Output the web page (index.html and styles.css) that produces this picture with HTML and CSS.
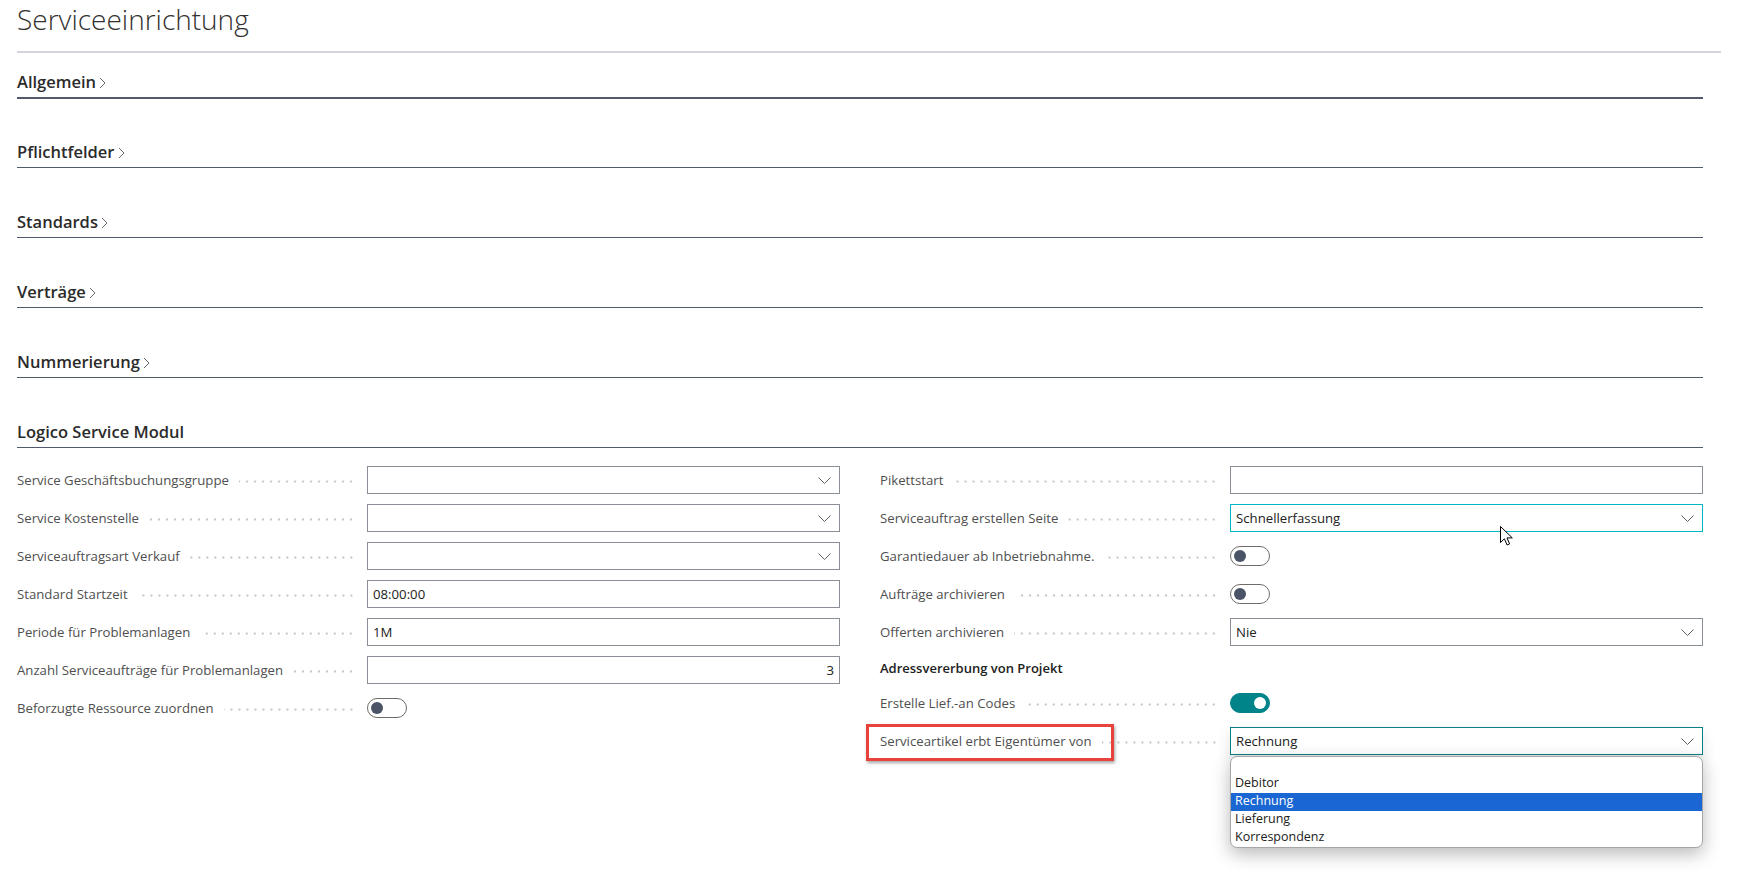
FILE: index.html
```html
<!DOCTYPE html>
<html lang="de">
<head>
<meta charset="utf-8">
<title>Serviceeinrichtung</title>
<link rel="stylesheet" href="styles.css">
</head>
<body>
<div class="page">
  <h1 class="title">Serviceeinrichtung</h1>
  <div class="divider"></div>

  <section class="fasttab first">
    <div class="tab-head"><span>Allgemein</span><svg class="tab-chev" width="7" height="12" viewBox="0 0 7 12"><polyline points="1,1 6,6 1,11" fill="none" stroke="#6b6b6b" stroke-width="1"/></svg></div>
  </section>
  <section class="fasttab">
    <div class="tab-head"><span>Pflichtfelder</span><svg class="tab-chev" width="7" height="12" viewBox="0 0 7 12"><polyline points="1,1 6,6 1,11" fill="none" stroke="#6b6b6b" stroke-width="1"/></svg></div>
  </section>
  <section class="fasttab">
    <div class="tab-head"><span>Standards</span><svg class="tab-chev" width="7" height="12" viewBox="0 0 7 12"><polyline points="1,1 6,6 1,11" fill="none" stroke="#6b6b6b" stroke-width="1"/></svg></div>
  </section>
  <section class="fasttab">
    <div class="tab-head"><span>Verträge</span><svg class="tab-chev" width="7" height="12" viewBox="0 0 7 12"><polyline points="1,1 6,6 1,11" fill="none" stroke="#6b6b6b" stroke-width="1"/></svg></div>
  </section>
  <section class="fasttab">
    <div class="tab-head"><span>Nummerierung</span><svg class="tab-chev" width="7" height="12" viewBox="0 0 7 12"><polyline points="1,1 6,6 1,11" fill="none" stroke="#6b6b6b" stroke-width="1"/></svg></div>
  </section>
  <section class="fasttab open">
    <div class="tab-head"><span>Logico Service Modul</span></div>
    <div class="fields">
      <div class="col">
        <div class="row"><div class="lbl"><span>Service Geschäftsbuchungsgruppe</span><i class="dots"></i></div>
          <div class="box"><span class="val"></span><svg class="chev" width="13" height="7" viewBox="0 0 13 7"><polyline points="0.5,0.5 6.5,6.5 12.5,0.5" fill="none" stroke="#5f5f5f" stroke-width="1"/></svg></div></div>
        <div class="row"><div class="lbl"><span>Service Kostenstelle</span><i class="dots"></i></div>
          <div class="box"><span class="val"></span><svg class="chev" width="13" height="7" viewBox="0 0 13 7"><polyline points="0.5,0.5 6.5,6.5 12.5,0.5" fill="none" stroke="#5f5f5f" stroke-width="1"/></svg></div></div>
        <div class="row"><div class="lbl"><span>Serviceauftragsart Verkauf</span><i class="dots"></i></div>
          <div class="box"><span class="val"></span><svg class="chev" width="13" height="7" viewBox="0 0 13 7"><polyline points="0.5,0.5 6.5,6.5 12.5,0.5" fill="none" stroke="#5f5f5f" stroke-width="1"/></svg></div></div>
        <div class="row"><div class="lbl"><span>Standard Startzeit</span><i class="dots"></i></div>
          <div class="box"><span class="val">08:00:00</span></div></div>
        <div class="row"><div class="lbl"><span>Periode für Problemanlagen</span><i class="dots"></i></div>
          <div class="box"><span class="val">1M</span></div></div>
        <div class="row"><div class="lbl"><span>Anzahl Serviceaufträge für Problemanlagen</span><i class="dots"></i></div>
          <div class="box num"><span class="val">3</span></div></div>
        <div class="row"><div class="lbl"><span>Beforzugte Ressource zuordnen</span><i class="dots"></i></div>
          <div class="ctl"><span class="toggle"><span class="knob"></span></span></div></div>
      </div>

      <div class="col">
        <div class="row"><div class="lbl"><span>Pikettstart</span><i class="dots"></i></div>
          <div class="box"><span class="val"></span></div></div>
        <div class="row"><div class="lbl"><span>Serviceauftrag erstellen Seite</span><i class="dots"></i></div>
          <div class="box focus"><span class="val">Schnellerfassung</span><svg class="chev" width="13" height="7" viewBox="0 0 13 7"><polyline points="0.5,0.5 6.5,6.5 12.5,0.5" fill="none" stroke="#5f5f5f" stroke-width="1"/></svg></div></div>
        <div class="row"><div class="lbl"><span>Garantiedauer ab Inbetriebnahme.</span><i class="dots"></i></div>
          <div class="ctl"><span class="toggle"><span class="knob"></span></span></div></div>
        <div class="row"><div class="lbl"><span>Aufträge archivieren</span><i class="dots"></i></div>
          <div class="ctl"><span class="toggle"><span class="knob"></span></span></div></div>
        <div class="row"><div class="lbl"><span>Offerten archivieren</span><i class="dots"></i></div>
          <div class="box"><span class="val">Nie</span><svg class="chev" width="13" height="7" viewBox="0 0 13 7"><polyline points="0.5,0.5 6.5,6.5 12.5,0.5" fill="none" stroke="#5f5f5f" stroke-width="1"/></svg></div></div>
        <div class="caption">Adressvererbung von Projekt</div>
        <div class="row"><div class="lbl"><span>Erstelle Lief.-an Codes</span><i class="dots"></i></div>
          <div class="ctl"><span class="toggle on"><span class="knob"></span></span></div></div>
        <div class="row"><div class="lbl marked"><span>Serviceartikel erbt Eigentümer von</span><i class="dots"></i><b class="annot"></b></div>
          <div class="box open-select"><span class="val">Rechnung</span><svg class="chev" width="13" height="7" viewBox="0 0 13 7"><polyline points="0.5,0.5 6.5,6.5 12.5,0.5" fill="none" stroke="#5f5f5f" stroke-width="1"/></svg>
            <ul class="list">
              <li>&nbsp;</li>
              <li>Debitor</li>
              <li class="sel">Rechnung</li>
              <li>Lieferung</li>
              <li>Korrespondenz</li>
            </ul>
          </div></div>
      </div>
    </div>
  </section>

  <svg class="cursor" width="14" height="21" viewBox="0 0 14 21"><path d="M0.5 0.5 L0.5 16.5 L4.4 12.8 L7.1 19 L9.6 17.9 L7 11.9 L12.3 11.9 Z" fill="#fff" stroke="#000" stroke-width="1" stroke-linejoin="round"/></svg>
</div>
</body>
</html>
```
FILE: styles.css
```css
* { box-sizing: border-box; }
html, body { margin: 0; background: #fff; }
body { font-family: "Open Sans", "Noto Sans", sans-serif; color: #212121; }

.page { position: relative; width: 1740px; height: 878px; padding-left: 17px; overflow: hidden; }

.title { margin: 0; padding-top: 0; font-weight: 300; font-size: 28px; line-height: 38px; color: #323130; }
.divider { margin-top: 13px; width: 1704px; height: 2px; background: #d2d5da; }

.fasttab { width: 1686px; margin-top: 42px; }
.fasttab.first { margin-top: 17px; margin-bottom: -1px; }
.tab-head { display: flex; align-items: center; gap: 3px; height: 28px; padding-bottom: 3px; border-bottom: 1px solid #505a6b; font-size: 16.5px; font-weight: 600; line-height: 24px; color: #2b2b2b; }
.fasttab.first .tab-head { height: 29px; border-bottom-width: 2px; }
.tab-chev { margin-top: 2px; }

.fields { display: grid; grid-template-columns: 823px 823px; column-gap: 40px; padding-top: 18px; }
.col { display: flex; flex-direction: column; gap: 10px; }

.row { display: grid; grid-template-columns: 350px 1fr; height: 28px; align-items: center; }
.lbl { position: relative; display: flex; align-items: center; font-size: 13.2px; color: #4f4f4f; white-space: nowrap; height: 28px; }
.dots { flex: 1; height: 3px; margin: 2px 12px 0 10px; background-image: radial-gradient(circle, #c4c4c4 0.9px, transparent 1.3px); background-size: 8px 3px; background-position: right center; }

.box { position: relative; display: flex; align-items: center; height: 28px; border: 1px solid #8a8e96; padding: 0 8px 0 5px; font-size: 13.2px; color: #212121; background: #fff; }
.box .val { flex: 1; }
.box.num .val { text-align: right; }
.box.num { padding-right: 5px; }
.box.focus { border-color: #00b7c3; }
.box.open-select { border-color: #0b7f86; box-shadow: 0 6px 14px rgba(0,0,0,0.12); }
.chev { flex: none; }

.ctl { display: flex; align-items: center; height: 28px; }
.toggle { position: relative; display: block; width: 40px; height: 20px; border: 1px solid #6e6c6a; border-radius: 10px; background: #fff; }
.toggle .knob { position: absolute; left: 3px; top: 3px; width: 12px; height: 12px; border-radius: 50%; background: #4b5466; }
.toggle.on { background: #008489; border-color: #008489; }
.toggle.on .knob { left: auto; right: 3px; background: #fff; }

.caption { height: 23px; display: flex; align-items: center; font-size: 13px; font-weight: 600; color: #212121; }

.annot { position: absolute; left: -14px; top: -3px; width: 248px; height: 37px; border: 3px solid #e8423c; box-shadow: 1px 2px 3px rgba(0,0,0,0.35); }

.list { position: absolute; left: -1px; right: -1px; top: 28px; margin: 0; padding: 0; list-style: none; background: #fff; border: 1px solid #a6a6a6; border-radius: 7px; overflow: hidden; box-shadow: 0 6px 18px rgba(0,0,0,0.28); z-index: 5; }
.list li { height: 18px; line-height: 16px; padding-left: 4px; font-size: 12.5px; color: #212121; }
.list li.sel { background: #1a66d2; color: #fff; }

.cursor { position: absolute; left: 1500px; top: 526px; z-index: 10; }
```
